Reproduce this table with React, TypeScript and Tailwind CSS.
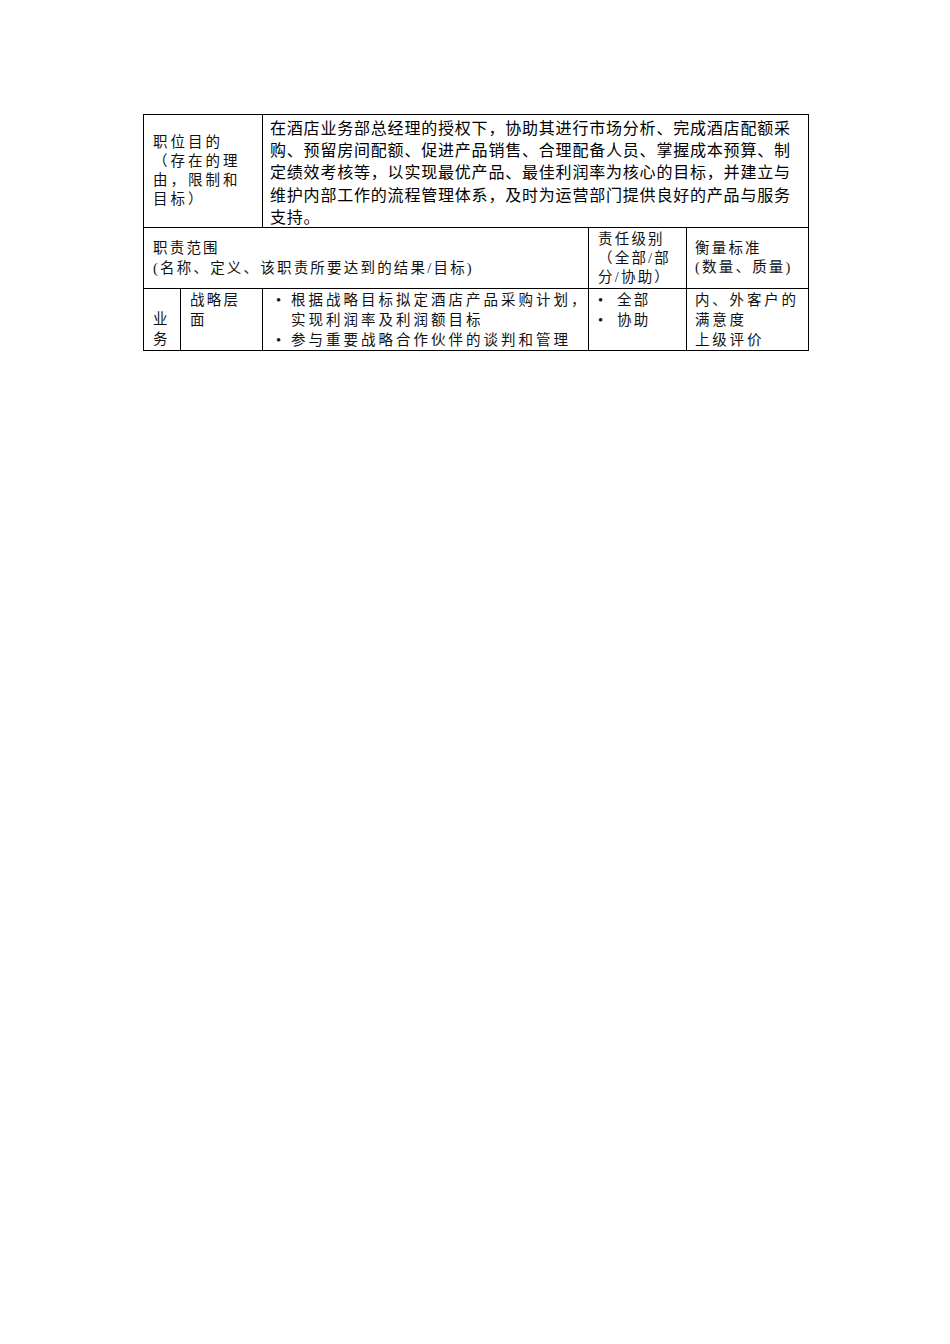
import React from "react";

const serif = "font-['Liberation_Serif','Noto_Sans_CJK_SC',serif] text-[14.5px] tracking-[2.2px] text-[#111]";
const sans = "font-['Noto_Sans_CJK_SC',sans-serif] font-normal text-[16px] tracking-[0.8px] text-black";

function Lines({ lines, lh }: { lines: string[]; lh: string }) {
  return (
    <div>
      {lines.map((l, i) => (
        <div key={i} className={`whitespace-nowrap ${lh}`}>
          {l}
        </div>
      ))}
    </div>
  );
}

export default function App() {
  return (
    <div className="min-h-[1344px] w-[950px] bg-white pt-[114px] pl-[143px]">
      <table className="table-fixed border-collapse w-[665px] border-[1.5px] border-black">
        <colgroup>
          <col className="w-[37px]" />
          <col className="w-[82px]" />
          <col className="w-[326px]" />
          <col className="w-[98px]" />
          <col className="w-[122px]" />
        </colgroup>
        <tbody>
          <tr className="h-[112px]">
            <td colSpan={2} className={`border border-black pl-[9px] align-middle ${serif} tracking-[3px]`}>
              <Lines lh="leading-[19px]" lines={["职位目的", "（存在的理", "由，限制和", "目标）"]} />
            </td>
            <td colSpan={3} className={`border border-black pl-[7px] align-top pt-[1px] pb-0 ${sans}`}>
              <Lines
                lh="leading-[22.2px]"
                lines={[
                  "在酒店业务部总经理的授权下，协助其进行市场分析、完成酒店配额采",
                  "购、预留房间配额、促进产品销售、合理配备人员、掌握成本预算、制",
                  "定绩效考核等，以实现最优产品、最佳利润率为核心的目标，并建立与",
                  "维护内部工作的流程管理体系，及时为运营部门提供良好的产品与服务",
                  "支持。",
                ]}
              />
            </td>
          </tr>
          <tr className="h-[61px]">
            <td colSpan={3} className={`border border-black pl-[9px] align-middle ${serif} tracking-[1.4px]`}>
              <Lines lh="leading-[20px]" lines={["职责范围", "(名称、定义、该职责所要达到的结果/目标)"]} />
            </td>
            <td className={`border border-black pl-[9px] align-middle ${serif}`}>
              <Lines lh="leading-[19px]" lines={["责任级别", "（全部/部", "分/协助）"]} />
            </td>
            <td className={`border border-black pl-[8px] align-middle ${serif} tracking-[1.4px]`}>
              <Lines lh="leading-[19px]" lines={["衡量标准", "(数量、质量)"]} />
            </td>
          </tr>
          <tr className="h-[61px]">
            <td className={`border border-black pl-[9px] align-bottom pb-[1px] ${serif}`}>
              <Lines lh="leading-[20px]" lines={["业", "务"]} />
            </td>
            <td className={`border border-black pl-[9px] align-top pt-[1px] ${serif}`}>
              <Lines lh="leading-[20px]" lines={["战略层", "面"]} />
            </td>
            <td className={`border border-black pl-[13px] align-top pt-[1px] ${serif} tracking-[3px]`}>
              <div className="flex leading-[20px]">
                <span className="w-[15px] shrink-0 tracking-normal">•</span>
                <div>
                  <div className="whitespace-nowrap">根据战略目标拟定酒店产品采购计划，</div>
                  <div className="whitespace-nowrap">实现利润率及利润额目标</div>
                </div>
              </div>
              <div className="flex leading-[20px]">
                <span className="w-[15px] shrink-0 tracking-normal">•</span>
                <div className="whitespace-nowrap">参与重要战略合作伙伴的谈判和管理</div>
              </div>
            </td>
            <td className={`border border-black pl-[9px] align-top pt-[1px] ${serif}`}>
              <div className="flex leading-[20px]">
                <span className="w-[19px] shrink-0 tracking-normal">•</span>
                <span>全部</span>
              </div>
              <div className="flex leading-[20px]">
                <span className="w-[19px] shrink-0 tracking-normal">•</span>
                <span>协助</span>
              </div>
            </td>
            <td className={`border border-black pl-[8px] align-top pt-[1px] ${serif} tracking-[2.8px]`}>
              <Lines lh="leading-[20px]" lines={["内、外客户的", "满意度", "上级评价"]} />
            </td>
          </tr>
        </tbody>
      </table>
    </div>
  );
}
